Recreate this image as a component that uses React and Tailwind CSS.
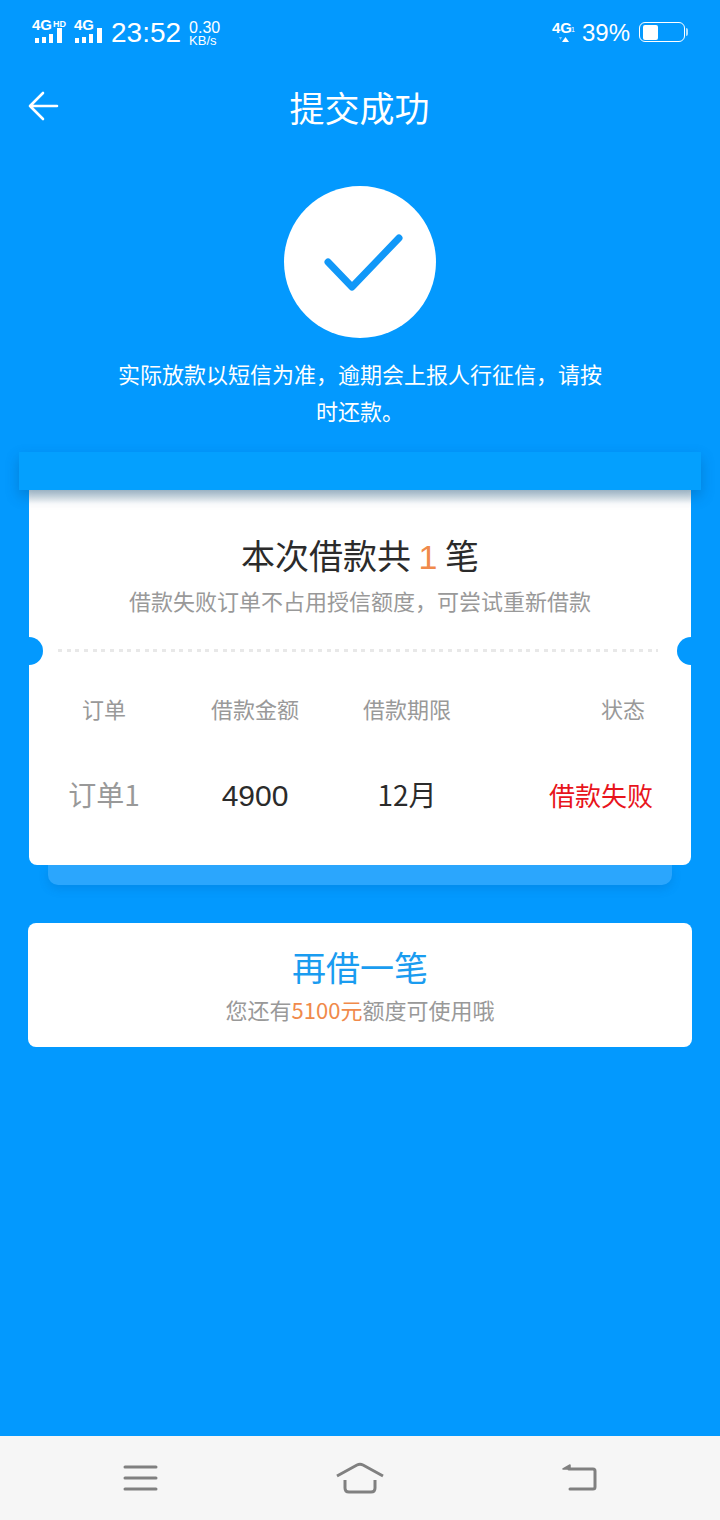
const cjk = { fontFamily: '"Noto Sans CJK SC", sans-serif' };
const latin = { fontFamily: '"Liberation Sans", sans-serif' };

function Signal({ hd }) {
  return (
    <div className="relative w-[32px] h-[28px] mb-[4px]">
      <svg width="32" height="28" viewBox="0 0 32 28" className="block" fill="#fff">
        <rect x="3" y="21" width="4" height="5" />
        <rect x="10" y="20" width="4" height="6" />
        <rect x="17" y="17" width="4" height="9" />
        <rect x="25" y="11" width="5" height="15" />
      </svg>
      <span className={hd ? "absolute left-0 top-[-1px] font-bold text-[15px] leading-[17px]" : "absolute left-[2px] top-[-1px] font-bold text-[15px] leading-[17px]"}>4G</span>
      {hd && <span className="absolute left-[21px] top-[2px] font-bold text-[9px] leading-[10px]">HD</span>}
    </div>
  );
}

function StatusBar() {
  return (
    <div className="h-[66px] flex items-center justify-between px-[32px] text-white" style={latin}>
      <div className="flex items-center">
        <Signal hd />
        <div className="w-[8px]" />
        <Signal />
        <span className="text-[28px] leading-none ml-[7px]">23:52</span>
        <div className="ml-[8px] flex flex-col items-start">
          <span className="text-[16px] leading-[14px]">0.30</span>
          <span className="text-[13px] leading-[11px]">KB/s</span>
        </div>
      </div>
      <div className="flex items-center">
        <div className="relative w-[22px] h-[28px] mr-[8px] mb-[6px]">
          <span className="absolute left-0 top-[3px] font-bold text-[15px] leading-[17px]">4G</span>
          <span className="absolute left-[19px] top-[10px] text-[7px] leading-[8px]">1</span>
          <svg width="22" height="28" viewBox="0 0 22 28" className="block" fill="#fff">
            <path d="M10 26 L13.5 21 L17 26 Z" />
            <path d="M7 21 L10 21 L8.5 24 Z" opacity="0.5" />
          </svg>
        </div>
        <span className="text-[24px] leading-none">39%</span>
        <div className="ml-[9px] mb-[2px] flex items-center">
          <div className="w-[46px] h-[20px] rounded-[6px] border-[1.5px] border-white p-[1.5px] pl-[2.5px]">
            <div className="w-[15px] h-full bg-white rounded-[2px]" />
          </div>
          <div className="ml-[1px] w-[2px] h-[8px] bg-white/70 rounded-r-[2px]" />
        </div>
      </div>
    </div>
  );
}

const headers = ["订单", "借款金额", "借款期限"];

export default function App() {
  return (
    <div className="w-[720px] h-[1520px] flex flex-col bg-[#0399fe] overflow-hidden" style={cjk}>
      <StatusBar />
      <div className="h-[84px] grid grid-cols-[1fr_auto_1fr] items-center pl-[28px] pb-[4px]">
        <svg width="31" height="30" viewBox="0 0 31 30" fill="none" stroke="#fff" strokeWidth="2.6" strokeLinecap="round" strokeLinejoin="round">
          <path d="M2 15 H29 M15 2 L2 15 L15 28" />
        </svg>
        <div className="text-white text-[35px] leading-none pr-[29px]">提交成功</div>
      </div>

      <div className="mt-[36px] w-[152px] h-[152px] self-center rounded-full bg-white flex items-center justify-center">
        <svg width="152" height="152" viewBox="284 186 152 152" fill="none" stroke="#1198f8" strokeWidth="7" strokeLinecap="round" strokeLinejoin="round">
          <path d="M328 262 L352 287 L399 238" />
        </svg>
      </div>
      <p className="mt-[17px] w-[490px] self-center text-center text-white text-[22px] leading-[37px]">
        实际放款以短信为准，逾期会上报人行征信，请按时还款。
      </p>

      <div className="mt-[23px] mx-[19px] h-[38px] bg-[#04a0fe] shadow-[0_6px_14px_rgba(0,60,110,0.28)] relative z-10" />

      <div className="mx-[29px] h-[375px] bg-white rounded-b-[8px] relative flex flex-col overflow-hidden">
        <div className="h-[14px] bg-gradient-to-b from-[#c9d6dc] to-white absolute top-0 inset-x-0" />
        <div className="mt-[45px] text-center text-[34px] leading-[40px] text-[#2b2b2b]">
          本次借款共 <span className="text-[#f08a4b]" style={latin}>1</span> 笔
        </div>
        <div className="mt-[7px] text-center text-[22px] leading-[32px] text-[#999]">借款失败订单不占用授信额度，可尝试重新借款</div>
        <div className="mt-[33px] ml-[29px] w-[600px] h-[3px] bg-[repeating-linear-gradient(90deg,#e8e8e8_0,#e8e8e8_4px,transparent_4px,transparent_8.67px)]" />
        <div className="absolute left-[-14px] top-[147px] w-[28px] h-[28px] rounded-full bg-[#0399fe]" />
        <div className="absolute right-[-14px] top-[147px] w-[28px] h-[28px] rounded-full bg-[#0399fe]" />

        <div className="mt-[40px] grid grid-cols-[150px_152px_152px_1fr] text-[22px] leading-[32px] text-[#999] text-center">
          {headers.map((h) => <div key={h}>{h}</div>)}
          <div className="text-right pr-[46px]">状态</div>
        </div>
        <div className="mt-[50px] grid grid-cols-[150px_152px_152px_1fr] text-[28px] leading-[40px] text-center">
          <div className="text-[#999]">订单1</div>
          <div className="text-[#2b2b2b] text-[30px] pt-[2px]" style={latin}>4900</div>
          <div className="text-[#2b2b2b]">12月</div>
          <div className="text-right pr-[38px] pt-[1px] text-[26px] text-[#e8141c]">借款失败</div>
        </div>
      </div>
      <div className="mx-[48px] h-[20px] bg-[#2ba6fd] rounded-b-[10px] shadow-[0_4px_10px_rgba(0,80,150,0.18)]" />

      <div className="mt-[38px] mx-[28px] h-[124px] bg-white rounded-[8px] flex flex-col items-center">
        <div className="mt-[22px] text-[34px] leading-[44px] text-[#1a9cf0]">再借一笔</div>
        <div className="mt-[5px] text-[22px] leading-[30px] text-[#999]">
          您还有<span className="text-[#f08a4b]">5100元</span>额度可使用哦
        </div>
      </div>

      <div className="mt-auto h-[84px] bg-[#f6f6f6] flex items-center justify-between px-[123px]">
        <svg width="36" height="28" viewBox="0 0 36 28" fill="none" stroke="#808080" strokeWidth="3" strokeLinecap="round">
          <path d="M2 3 H33 M2 14 H33 M2 25 H33" />
        </svg>
        <svg width="50" height="32" viewBox="0 0 50 32" fill="none" stroke="#808080" strokeWidth="3">
          <path d="M2 14 L22 3 Q25 1.5 28 3 L48 14" />
          <path d="M10 18 V26 Q10 30 14 30 H36 Q40 30 40 26 V18" />
        </svg>
        <svg width="36" height="28" viewBox="0 0 36 28" fill="none" stroke="#808080" strokeWidth="3" strokeLinecap="round">
          <path d="M8 5 H32 Q34 5 34 7 V23 Q34 25 32 25 H9" />
          <path d="M2 5 L9 1 V5 Z" fill="#808080" stroke="#808080" strokeWidth="1.5" strokeLinejoin="round" />
        </svg>
      </div>
    </div>
  );
}
